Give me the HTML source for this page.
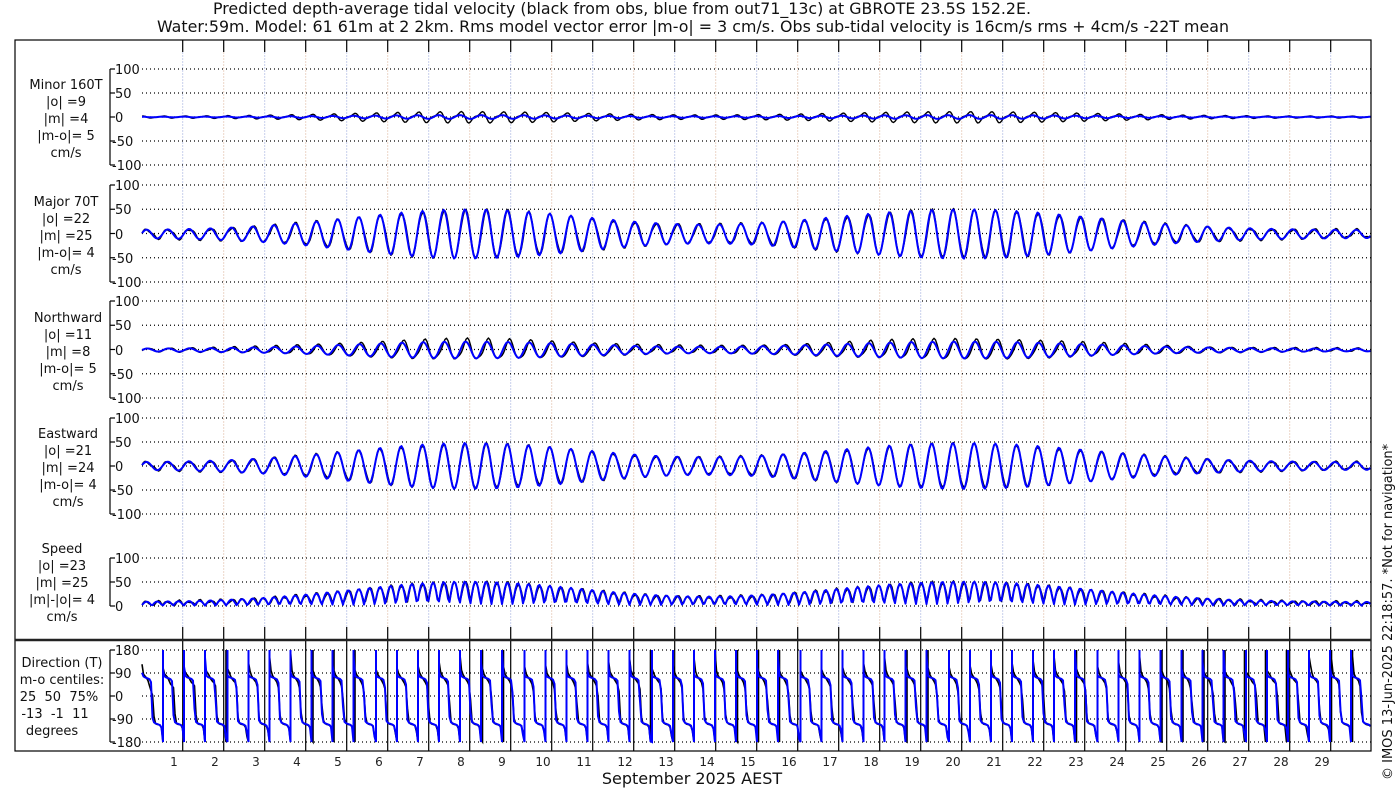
<!DOCTYPE html>
<html><head><meta charset="utf-8"><style>
html,body{margin:0;padding:0;background:#fff;}
svg{display:block;font-family:"DejaVu Sans","Liberation Sans",sans-serif;}
text{white-space:pre;}
</style></head><body>
<svg id="s" width="1400" height="800" viewBox="0 0 1400 800" xmlns="http://www.w3.org/2000/svg" xml:space="preserve">
<rect x="0" y="0" width="1400" height="800" fill="#fff"/>
<g id="grid"></g>
<g id="data"></g>
<rect x="15" y="40" width="1356" height="711" fill="none" stroke="#000" stroke-width="1.2"/>
<line x1="15" y1="640" x2="1371" y2="640" stroke="#222" stroke-width="2.5"/>
<g font-size="16" fill="#111">
<text x="213" y="14" textLength="818" lengthAdjust="spacingAndGlyphs">Predicted depth-average tidal velocity (black from obs, blue from out71_13c) at GBROTE 23.5S 152.2E.</text>
<text x="157" y="32" textLength="1072" lengthAdjust="spacingAndGlyphs">Water:59m. Model: 61 61m at 2 2km. Rms model vector error |m-o| = 3 cm/s. Obs sub-tidal velocity is 16cm/s rms + 4cm/s -22T mean</text>
<text x="692" y="784" text-anchor="middle">September 2025 AEST</text>
</g>
<text transform="translate(1392,780) rotate(-90)" font-size="13" fill="#111">© IMOS 13-Jun-2025 22:18:57. *Not for navigation*</text>
<g font-size="13" fill="#111" text-anchor="middle" id="lbl">
<text x="66" y="89">Minor 160T</text><text x="66" y="106">|o| =9</text><text x="66" y="123">|m| =4</text><text x="66" y="140">|m-o|= 5</text><text x="66" y="157">cm/s</text>
<text x="66" y="206">Major 70T</text><text x="66" y="223">|o| =22</text><text x="66" y="240">|m| =25</text><text x="66" y="257">|m-o|= 4</text><text x="66" y="274">cm/s</text>
<text x="68" y="322">Northward</text><text x="68" y="339">|o| =11</text><text x="68" y="356">|m| =8</text><text x="68" y="373">|m-o|= 5</text><text x="68" y="390">cm/s</text>
<text x="68" y="438">Eastward</text><text x="68" y="455">|o| =21</text><text x="68" y="472">|m| =24</text><text x="68" y="489">|m-o|= 4</text><text x="68" y="506">cm/s</text>
<text x="62" y="553">Speed</text><text x="62" y="570">|o| =23</text><text x="62" y="587">|m| =25</text><text x="62" y="604">|m|-|o|= 4</text><text x="62" y="621">cm/s</text>
<text x="62" y="667">Direction (T)</text><text x="62" y="684">m-o centiles:</text><text x="59" y="701">25  50  75%</text><text x="55" y="718">-13  -1  11</text><text x="52" y="735">degrees</text>
</g>
<g font-size="13" fill="#111" id="axes">
<text x="115" y="74">100</text><text x="115" y="98">50</text><text x="115" y="122">0</text><text x="112" y="146">-50</text><text x="112" y="170">-100</text>
<text x="115" y="190">100</text><text x="115" y="214">50</text><text x="115" y="239">0</text><text x="112" y="263">-50</text><text x="112" y="287">-100</text>
<text x="115" y="306">100</text><text x="115" y="330">50</text><text x="115" y="355">0</text><text x="112" y="379">-50</text><text x="112" y="403">-100</text>
<text x="115" y="423">100</text><text x="115" y="447">50</text><text x="115" y="471">0</text><text x="112" y="495">-50</text><text x="112" y="519">-100</text>
<text x="115" y="563">100</text><text x="115" y="587">50</text><text x="115" y="611">0</text>
<text x="115" y="655">180</text><text x="115" y="678">90</text><text x="115" y="701">0</text><text x="112" y="724">-90</text><text x="112" y="747">-180</text>
</g>
<g font-size="12" fill="#222" text-anchor="middle" id="days">
<text x="174" y="766">1</text><text x="215" y="766">2</text><text x="256" y="766">3</text><text x="297" y="766">4</text><text x="338" y="766">5</text><text x="379" y="766">6</text><text x="420" y="766">7</text><text x="461" y="766">8</text><text x="502" y="766">9</text><text x="543" y="766">10</text><text x="584" y="766">11</text><text x="625" y="766">12</text><text x="666" y="766">13</text><text x="707" y="766">14</text><text x="748" y="766">15</text><text x="789" y="766">16</text><text x="830" y="766">17</text><text x="871" y="766">18</text><text x="912" y="766">19</text><text x="953" y="766">20</text><text x="994" y="766">21</text><text x="1035" y="766">22</text><text x="1076" y="766">23</text><text x="1117" y="766">24</text><text x="1158" y="766">25</text><text x="1199" y="766">26</text><text x="1240" y="766">27</text><text x="1281" y="766">28</text><text x="1322" y="766">29</text>
</g>
</svg>
<script>
(function(){
var NS="http://www.w3.org/2000/svg",g=document.getElementById('grid'),dg=document.getElementById('data');
function el(p,t,a){var e=document.createElementNS(NS,t);for(var k in a)e.setAttribute(k,a[k]);p.appendChild(e);return e;}
var X0=141.7,DW=41;
for(var n=1;n<=29;n++){var x=X0+DW*n;
 el(g,'line',{x1:x,y1:52,x2:x,y2:627,stroke:(n%2?'#c8d0ec':'#ecd6c8'),'stroke-width':1,'stroke-dasharray':'2,1'});
 el(g,'line',{x1:x,y1:40,x2:x,y2:52,stroke:'#000','stroke-width':1.2});
 el(g,'line',{x1:x,y1:627,x2:x,y2:640,stroke:'#000','stroke-width':1.2});
 el(g,'line',{x1:x,y1:640,x2:x,y2:751,stroke:'#000','stroke-width':1.2});
}
var panels=[[69,117,165,5],[185,234,282,5],[301,350,398,5],[418,466,514,5],[558,582,606,3],[650,696,742,5]];
panels.forEach(function(p){
 el(g,'line',{x1:110,y1:p[0],x2:110,y2:p[2],stroke:'#000','stroke-width':1.2});
 for(var i=0;i<p[3];i++){var y=p[0]+(p[2]-p[0])*i/(p[3]-1);
  el(g,'line',{x1:110,y1:y,x2:115,y2:y,stroke:'#000','stroke-width':1.2});
  el(g,'line',{x1:142,y1:y,x2:1371,y2:y,stroke:'#000','stroke-width':1.2,'stroke-dasharray':'1,3'});}
});
function env(d){return Math.min(1,0.16+0.84*Math.exp(-Math.pow((d-8)/4,2))+0.84*Math.exp(-Math.pow((d-20)/4.5,2)));}
var obs={},mod={};['mi','ma','n','e','s','dir'].forEach(function(k){obs[k]=[];mod[k]=[];});
var xs=[];
for(var x=142;x<=1371;x+=1.5){xs.push(x);var d=(x-X0)/DW;var E=env(d);
 var ph=2*Math.PI*d*1.932;
 [[obs,1.0,0.0,10,0.15],[mod,1.02,0.12,4,-0.1]].forEach(function(c){
  var o=c[0];var ma=50*E*c[1]*Math.sin(ph+c[2])+(o===obs?3*Math.sin(ph*2.1):0);
  var mi=c[3]*E*Math.cos(ph+c[2]+c[4])+(o===obs?4*E*Math.sin(2*ph):0);
  var a=70*Math.PI/180,b=160*Math.PI/180;
  var N=ma*Math.cos(a)+mi*Math.cos(b),Ea=ma*Math.sin(a)+mi*Math.sin(b);
  o.mi.push(mi);o.ma.push(ma);o.n.push(N);o.e.push(Ea);o.s.push(Math.sqrt(N*N+Ea*Ea));
  o.dir.push(Math.atan2(Ea,N)*180/Math.PI);
 });}
function path(arr,y0,sc,col,w){var s='';
 for(var i=0;i<arr.length;i++){s+=(i?'L':'M')+xs[i].toFixed(1)+' '+(y0-arr[i]*sc).toFixed(1);}
 el(dg,'path',{d:s,fill:'none',stroke:col,'stroke-width':w,'stroke-linejoin':'round'});}
[['mi',117,0.48],['ma',234,0.485],['n',350,0.485],['e',466,0.48],['s',606,0.48]].forEach(function(m){path(obs[m[0]],m[1],m[2],'#000',1.4);path(mod[m[0]],m[1],m[2],'#0000ff',2);});
function dirp(arr,col,w){var s='';for(var i=0;i<arr.length;i++){var v=arr[i],y=696-v*46/180;
 if(i&&Math.abs(v-arr[i-1])>180){var py=696-(arr[i-1]>0?180:-180)*46/180;var ny=696-(v>0?180:-180)*46/180;s+='L'+xs[i].toFixed(1)+' '+py.toFixed(1)+'L'+xs[i].toFixed(1)+' '+ny.toFixed(1);}
 s+=(i?'L':'M')+xs[i].toFixed(1)+' '+y.toFixed(1);}
 el(dg,'path',{d:s,fill:'none',stroke:col,'stroke-width':w});}
dirp(obs.dir,'#000',1.6);dirp(mod.dir,'#0000ff',2);
})();
</script>
</body></html>
